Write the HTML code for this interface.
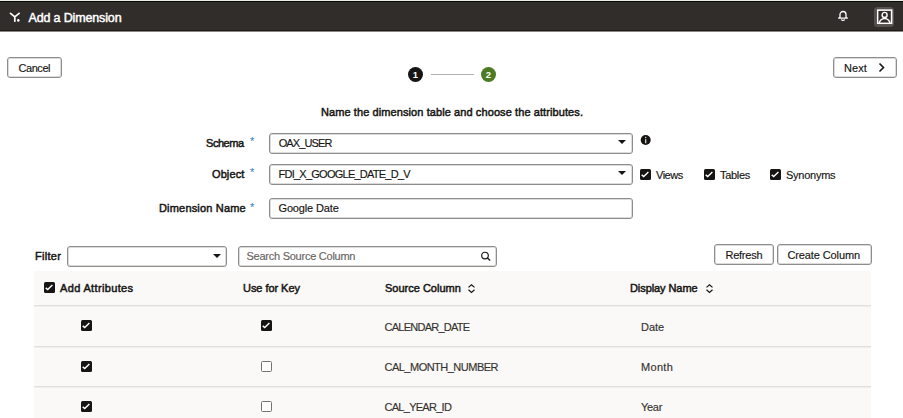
<!DOCTYPE html>
<html><head><meta charset="utf-8">
<style>
html,body{margin:0;padding:0;width:903px;height:418px;overflow:hidden;background:#fff;}
body{position:relative;font-family:"Liberation Sans",sans-serif;color:#161513;}
.a{position:absolute;white-space:nowrap;line-height:1;}
.t{font-size:11px;-webkit-text-stroke:0.15px currentColor;}
.b{font-size:11px;-webkit-text-stroke:0.48px currentColor;}
.btn,.inp{position:absolute;box-sizing:border-box;border:1px solid #8f8d8b;border-radius:3px;background:#fff;box-shadow:inset 0 0 0 1px #dcdbd9;}
.cb{position:absolute;width:11px;height:11px;box-sizing:border-box;background:#161513;border-radius:1.5px;}
.cb svg{position:absolute;left:0;top:0;}
.cbu{position:absolute;width:11px;height:11px;box-sizing:border-box;border:1.5px solid #75726f;border-radius:1.5px;background:#fff;}
.arr{position:absolute;width:0;height:0;border-left:4px solid transparent;border-right:4px solid transparent;border-top:4px solid #161513;}
.hl{position:absolute;left:34px;width:837px;height:1px;background:#e2e0dd;}
</style></head><body>
<div class="a" style="left:0;top:0;width:903px;height:1px;background:#ebebe8"></div>
<div class="a" style="left:0;top:1px;width:903px;height:1px;background:#0b0908"></div>
<div class="a" style="left:0;top:2px;width:903px;height:28px;background:#312d2a"></div>
<div class="a" style="left:0;top:30px;width:903px;height:1px;background:#1d1a17"></div>
<div class="a" style="left:0;top:31px;width:903px;height:1px;background:#8a8886"></div>
<svg class="a" style="left:8.6px;top:11px" width="14" height="12" viewBox="0 0 14 12">
  <path d="M1.5 2.3 L5.8 5.8 M10.1 2.3 L5.8 5.8 L5.8 10.2" stroke="#fff" stroke-width="1.7" fill="none" stroke-linecap="round" stroke-linejoin="round"/>
  <circle cx="9.3" cy="9.4" r="1.3" fill="#fff"/>
</svg>
<div class="a" style="left:28.5px;top:11.5px;font-size:12.5px;color:#fff;letter-spacing:-0.15px;-webkit-text-stroke:0.45px #fff">Add a Dimension</div>
<svg class="a" style="left:837px;top:10px" width="12" height="12" viewBox="0 0 12 12">
  <path d="M3 7.6 L3 4.4 A3 2.9 0 0 1 9 4.4 L9 7.6 L10.4 8.1 L1.6 8.1 Z" stroke="#fff" stroke-width="1.3" fill="none" stroke-linejoin="round"/>
  <path d="M4.6 9.2 A1.4 1.3 0 0 0 7.4 9.2" stroke="#fff" stroke-width="1.2" fill="none"/>
</svg>
<div class="a" style="left:874px;top:7px;width:20px;height:20px;box-sizing:border-box;border:2px solid #55514e;border-radius:3.5px"></div>
<svg class="a" style="left:876px;top:9px" width="17" height="16" viewBox="0 0 17 16">
  <rect x="1.6" y="1.1" width="14" height="13.3" stroke="#fff" stroke-width="1.6" fill="none"/>
  <circle cx="8.6" cy="5.9" r="2.5" stroke="#fff" stroke-width="1.4" fill="none"/>
  <path d="M3.3 14.4 A5.3 4.9 0 0 1 13.9 14.4" stroke="#fff" stroke-width="1.5" fill="none"/>
</svg>
<div class="btn" style="left:7px;top:57px;width:55px;height:21px;"></div>
<div class="a t" style="left:18.5px;top:62.5px;letter-spacing:-0.45px;">Cancel</div>
<div class="btn" style="left:833px;top:57px;width:64px;height:21px;"></div>
<div class="a t" style="left:844px;top:62.5px;letter-spacing:0.1px;">Next</div>
<svg class="a" style="left:877px;top:62px" width="10" height="11" viewBox="0 0 10 11"><path d="M2.5 1.5 L6.5 5.5 L2.5 9.5" stroke="#161513" stroke-width="1.6" fill="none"/></svg>
<div class="a" style="left:408px;top:67px;width:15px;height:15px;border-radius:50%;background:#161513"></div>
<div class="a" style="left:411px;top:70px;width:9px;text-align:center;font-size:9.5px;font-weight:700;color:#fff">1</div>
<div class="a" style="left:431px;top:74px;width:43px;height:1px;background:#b3b1ae"></div>
<div class="a" style="left:481px;top:67px;width:15px;height:15px;border-radius:50%;background:#4c7b24"></div>
<div class="a" style="left:484px;top:70px;width:9px;text-align:center;font-size:9.5px;font-weight:700;color:#fff">2</div>
<div class="a b" style="left:321px;top:106.6px;letter-spacing:0.09px;">Name the dimension table and choose the attributes.</div>
<div class="a b" style="left:206px;top:138px;letter-spacing:-0.45px;">Schema</div>
<div class="a" style="left:250px;top:136px;font-size:11px;color:#3f82c9;-webkit-text-stroke:0.1px #3f82c9">*</div>
<div class="inp" style="left:269px;top:133px;width:364px;height:21px;"></div>
<div class="a t" style="left:278.7px;top:138px;letter-spacing:-0.88px;">OAX_USER</div>
<div class="arr" style="left:618px;top:140px"></div>
<svg class="a" style="left:640px;top:135px" width="12" height="11" viewBox="0 0 12 11"><circle cx="5.7" cy="5" r="5" fill="#161513"/><rect x="5.05" y="4.2" width="1.3" height="4" fill="#d8d8d8"/><circle cx="5.7" cy="2.6" r="0.75" fill="#d8d8d8"/></svg>
<div class="a b" style="left:212px;top:168.5px;letter-spacing:0.1px;">Object</div>
<div class="a" style="left:250px;top:167px;font-size:11px;color:#3f82c9;-webkit-text-stroke:0.1px #3f82c9">*</div>
<div class="inp" style="left:269px;top:164px;width:364px;height:21px;"></div>
<div class="a t" style="left:278.5px;top:169px;letter-spacing:-0.75px;">FDI_X_GOOGLE_DATE_D_V</div>
<div class="arr" style="left:618px;top:171px"></div>
<div class="cb" style="left:640px;top:169px"><svg width="11" height="11" viewBox="0 0 11 11"><path d="M1.7 5.9 L3.7 7.6 L8.4 3.1" stroke="#fff" stroke-width="1.4" fill="none"/></svg></div>
<div class="a t" style="left:656px;top:169.5px;letter-spacing:-0.5px;">Views</div>
<div class="cb" style="left:704px;top:169px"><svg width="11" height="11" viewBox="0 0 11 11"><path d="M1.7 5.9 L3.7 7.6 L8.4 3.1" stroke="#fff" stroke-width="1.4" fill="none"/></svg></div>
<div class="a t" style="left:720px;top:169.5px;letter-spacing:-0.3px;">Tables</div>
<div class="cb" style="left:770px;top:169px"><svg width="11" height="11" viewBox="0 0 11 11"><path d="M1.7 5.9 L3.7 7.6 L8.4 3.1" stroke="#fff" stroke-width="1.4" fill="none"/></svg></div>
<div class="a t" style="left:786px;top:169.5px;letter-spacing:-0.25px;">Synonyms</div>
<div class="a b" style="left:159px;top:203px;letter-spacing:0.18px;">Dimension Name</div>
<div class="a" style="left:250px;top:201.5px;font-size:11px;color:#3f82c9;-webkit-text-stroke:0.1px #3f82c9">*</div>
<div class="inp" style="left:269px;top:198px;width:364px;height:21px;"></div>
<div class="a t" style="left:278.5px;top:203px;letter-spacing:-0.15px;">Google Date</div>
<div class="a b" style="left:35px;top:250.5px;letter-spacing:0.3px;">Filter</div>
<div class="inp" style="left:67px;top:246px;width:160px;height:21px;"></div>
<div class="arr" style="left:213px;top:254px"></div>
<div class="inp" style="left:238px;top:246px;width:259px;height:21px;"></div>
<div class="a t" style="left:246.5px;top:250.5px;letter-spacing:-0.25px;color:#67635f;">Search Source Column</div>
<svg class="a" style="left:480px;top:251px" width="12" height="12" viewBox="0 0 12 12"><circle cx="5" cy="4.5" r="3.3" stroke="#161513" stroke-width="1.15" fill="none"/><path d="M7.4 6.9 L10.2 9.4" stroke="#161513" stroke-width="1.3"/></svg>
<div class="btn" style="left:714px;top:244px;width:60px;height:21px;"></div>
<div class="a t" style="left:725.5px;top:249.5px;letter-spacing:-0.25px;">Refresh</div>
<div class="btn" style="left:777px;top:244px;width:95px;height:21px;"></div>
<div class="a t" style="left:787.5px;top:249.5px;letter-spacing:-0.12px;">Create Column</div>
<div class="a" style="left:34px;top:271px;width:837px;height:147px;background:#faf9f7"></div>
<div class="hl" style="top:305px"></div>
<div class="hl" style="top:306px;background:#f0eeeb"></div>
<div class="hl" style="top:346px"></div>
<div class="hl" style="top:347px;background:#f0eeeb"></div>
<div class="hl" style="top:386px"></div>
<div class="hl" style="top:387px;background:#f0eeeb"></div>
<div class="cb" style="left:44px;top:282px"><svg width="11" height="11" viewBox="0 0 11 11"><path d="M1.7 5.9 L3.7 7.6 L8.4 3.1" stroke="#fff" stroke-width="1.4" fill="none"/></svg></div>
<div class="a b" style="left:60px;top:283px;letter-spacing:0.35px;">Add Attributes</div>
<div class="a b" style="left:243px;top:283px;letter-spacing:-0.05px;">Use for Key</div>
<div class="a b" style="left:385px;top:283px;">Source Column</div>
<svg class="a" style="left:467px;top:283px" width="9" height="11" viewBox="0 0 9 11"><path d="M1.5 4.4 L4.5 1.7 L7.5 4.4 M1.5 6.7 L4.5 9.4 L7.5 6.7" stroke="#161513" stroke-width="1.2" fill="none"/></svg>
<div class="a b" style="left:630px;top:283px;letter-spacing:-0.08px;">Display Name</div>
<svg class="a" style="left:705px;top:283px" width="9" height="11" viewBox="0 0 9 11"><path d="M1.5 4.4 L4.5 1.7 L7.5 4.4 M1.5 6.7 L4.5 9.4 L7.5 6.7" stroke="#161513" stroke-width="1.2" fill="none"/></svg>
<div class="cb" style="left:81px;top:320px"><svg width="11" height="11" viewBox="0 0 11 11"><path d="M1.7 5.9 L3.7 7.6 L8.4 3.1" stroke="#fff" stroke-width="1.4" fill="none"/></svg></div>
<div class="cb" style="left:261px;top:320px"><svg width="11" height="11" viewBox="0 0 11 11"><path d="M1.7 5.9 L3.7 7.6 L8.4 3.1" stroke="#fff" stroke-width="1.4" fill="none"/></svg></div>
<div class="a t" style="left:384.5px;top:322px;letter-spacing:-0.74px;color:#36322f;">CALENDAR_DATE</div>
<div class="a t" style="left:641px;top:322px;color:#36322f;">Date</div>
<div class="cb" style="left:81px;top:361px"><svg width="11" height="11" viewBox="0 0 11 11"><path d="M1.7 5.9 L3.7 7.6 L8.4 3.1" stroke="#fff" stroke-width="1.4" fill="none"/></svg></div>
<div class="cbu" style="left:261px;top:361px"></div>
<div class="a t" style="left:384.5px;top:361.5px;letter-spacing:-0.51px;color:#36322f;">CAL_MONTH_NUMBER</div>
<div class="a t" style="left:641px;top:361.5px;letter-spacing:0.3px;color:#36322f;">Month</div>
<div class="cb" style="left:81px;top:401px"><svg width="11" height="11" viewBox="0 0 11 11"><path d="M1.7 5.9 L3.7 7.6 L8.4 3.1" stroke="#fff" stroke-width="1.4" fill="none"/></svg></div>
<div class="cbu" style="left:261px;top:401px"></div>
<div class="a t" style="left:384.5px;top:401.5px;letter-spacing:-0.72px;color:#36322f;">CAL_YEAR_ID</div>
<div class="a t" style="left:641px;top:401.5px;letter-spacing:-0.3px;color:#36322f;">Year</div>
</body></html>
